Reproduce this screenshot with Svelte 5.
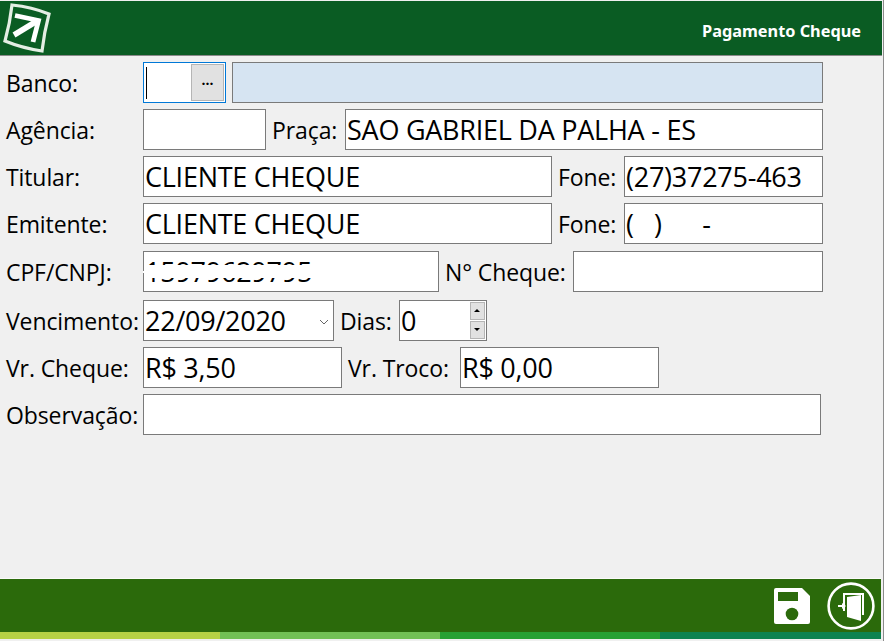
<script>
  let agencia = "";
  let praca = "SAO GABRIEL DA PALHA - ES";
  let titular = "CLIENTE CHEQUE";
  let foneTitular = "(27)37275-463";
  let emitente = "CLIENTE CHEQUE";
  let foneEmitente = "(   )      -";
  let cpf = "15979629795";
  let vencimento = "22/09/2020";
  let dias = "0";
  let vrCheque = "R$ 3,50";
  let vrTroco = "R$ 0,00";
</script>

<div class="page">
  <header class="top">
    <svg class="logo" viewBox="0 0 54 54" width="54" height="54">
      <path d="M12 4 Q32 6 49 13 Q44 32 42 50 Q22 47 5 40 Q10 22 12 4 Z" fill="none" stroke="#e4eee4" stroke-width="3.2" />
      <path d="M15 14.5 L38.5 19.5 L33 41" fill="none" stroke="#fff" stroke-width="4.8" />
      <path d="M37 20 L14 34" fill="none" stroke="#fff" stroke-width="5.6" />
    </svg>
    <span class="title">Pagamento Cheque</span>
  </header>

  <main class="form">
    <div class="row">
      <span class="lbl w-137">Banco:</span>
      <div class="field w-83 focus">
        <i class="caret"></i>
        <span class="lookup">...</span>
      </div>
      <div class="field w-591 tint"></div>
    </div>

    <div class="row">
      <span class="lbl w-137">Agência:</span>
      <div class="field w-123">{agencia}</div>
      <span class="lbl w-79 in">Praça:</span>
      <div class="field w-478">{praca}</div>
    </div>

    <div class="row">
      <span class="lbl w-137">Titular:</span>
      <div class="field w-409">{titular}</div>
      <span class="lbl w-72 in">Fone:</span>
      <div class="field w-199">{foneTitular}</div>
    </div>

    <div class="row">
      <span class="lbl w-137">Emitente:</span>
      <div class="field w-409">{emitente}</div>
      <span class="lbl w-72 in">Fone:</span>
      <div class="field w-199">{foneEmitente}</div>
    </div>

    <div class="row nudge-1">
      <span class="lbl w-137">CPF/CNPJ:</span>
      <div class="field w-296">{cpf}<i class="mask"></i></div>
      <span class="lbl w-134 in">N° Cheque:</span>
      <div class="field w-250"></div>
    </div>

    <div class="row nudge-2">
      <span class="lbl w-137">Vencimento:</span>
      <div class="field w-191">
        {vencimento}
        <svg class="chev" viewBox="0 0 10 6" width="10" height="6">
          <path d="M1 1 L5 5 L9 1" fill="none" stroke="#666" stroke-width="1" />
        </svg>
      </div>
      <span class="lbl w-65 in">Dias:</span>
      <div class="field w-88">
        {dias}
        <div class="spins">
          <span class="up"></span>
          <span class="down"></span>
        </div>
      </div>
    </div>

    <div class="row">
      <span class="lbl w-137">Vr. Cheque:</span>
      <div class="field w-199">{vrCheque}</div>
      <span class="lbl w-118 in">Vr. Troco:</span>
      <div class="field w-199">{vrTroco}</div>
    </div>

    <div class="row">
      <span class="lbl w-137">Observação:</span>
      <div class="field w-678"></div>
    </div>
  </main>

  <footer class="bottom">
    <svg viewBox="0 0 36 36" width="36" height="36">
      <path d="M2 0 H28 L36 8 V34 Q36 36 34 36 H2 Q0 36 0 34 V2 Q0 0 2 0 Z" fill="#fff" />
      <rect x="4" y="4" width="20" height="9" fill="#2b6a0b" />
      <circle cx="18" cy="26" r="6.3" fill="#2b6a0b" />
    </svg>
    <svg viewBox="0 0 48 48" width="48" height="48">
      <circle cx="24" cy="24" r="22.4" fill="none" stroke="#fff" stroke-width="2.6" />
      <path d="M16 29 V11 H37 V33 H35 V13 H18 V29 Z" fill="#fff" />
      <path d="M20 15 L34 13 V39 L20 35 Z" fill="#fff" />
      <path d="M11 24 H16" stroke="#fff" stroke-width="2" fill="none" />
      <path d="M15 21 L19 24 L15 27 Z" fill="#fff" />
    </svg>
  </footer>
  <div class="stripes">
    <span class="s1"></span><span class="s2"></span><span class="s3"></span><span class="s4"></span>
  </div>
</div>

<style>
  :global(body) {
    background: #f0f0f0;
  }
  .page {
    display: flex;
    flex-direction: column;
    width: 883px;
    height: 641px;
    overflow: hidden;
    font-family: "Open Sans", "Liberation Sans", sans-serif;
    color: #000;
    background: #f0f0f0;
    border-right: 1px solid #8c8c8c;
    box-sizing: content-box;
  }
  .top {
    display: flex;
    align-items: center;
    justify-content: space-between;
    height: 55px;
    margin: 1px 1px 0 0;
    padding: 0 21px 0 0;
    box-sizing: border-box;
    background: #0a5c23;
    border-bottom: 1px solid #8a8a8a;
    flex: none;
  }
  .logo {
    display: block;
  }
  .title {
    color: #fff;
    font-family: "Noto Sans", sans-serif;
    font-weight: 700;
    font-size: 16.3px;
    padding-top: 5px;
  }
  .form {
    flex: 1;
    display: flex;
    flex-direction: column;
    gap: 6px;
    padding: 6px 0 0 6px;
  }
  .row {
    display: flex;
    align-items: center;
    height: 41px;
  }
  .nudge-1 {
    margin-top: 1px;
  }
  .nudge-2 {
    margin-top: 2px;
  }
  .lbl {
    font-size: 23px;
    letter-spacing: -0.1px;
    white-space: nowrap;
    flex: none;
    padding-top: 1px;
  }
  .lbl.in {
    padding-left: 6px;
    box-sizing: border-box;
  }
  .field {
    display: flex;
    align-items: center;
    position: relative;
    height: 41px;
    box-sizing: border-box;
    flex: none;
    padding-left: 1px;
    background: #fff;
    border: 1px solid #7a7a7a;
    font-size: 27px;
    letter-spacing: -0.25px;
    white-space: pre;
  }
  .focus {
    border-color: #0078d7;
    padding: 0;
  }
  .caret {
    width: 1px;
    height: 32px;
    margin-left: 2px;
    background: #000;
  }
  .lookup {
    position: absolute;
    right: 1px;
    top: 1px;
    bottom: 1px;
    width: 33px;
    display: flex;
    align-items: center;
    justify-content: center;
    box-sizing: border-box;
    border: 1px solid #b5b5b5;
    background: #e1e1e1;
    font-size: 14px;
    font-weight: 700;
    line-height: 1;
    letter-spacing: 0;
    padding-bottom: 6px;
  }
  .tint {
    background: #d6e4f2;
    margin-left: 6px;
  }
  .mask {
    position: absolute;
    left: 0;
    top: 13px;
    width: 170px;
    height: 13px;
    background: #fff;
  }
  .mask::before {
    content: "";
    position: absolute;
    left: -1px;
    top: 6px;
    width: 1px;
    height: 2px;
    background: #fff;
  }
  .chev {
    position: absolute;
    right: 4px;
    top: 18px;
  }
  .spins {
    position: absolute;
    right: 1px;
    top: 1px;
    bottom: 1px;
    width: 15px;
    display: flex;
    flex-direction: column;
    gap: 1px;
  }
  .spins span {
    flex: 1;
    position: relative;
    background: #e1e1e1;
    border: 1px solid #b5b5b5;
  }
  .spins span::after {
    content: "";
    position: absolute;
    left: 3px;
    top: 6px;
    border-left: 3px solid transparent;
    border-right: 3px solid transparent;
  }
  .spins .up::after {
    border-bottom: 3px solid #000;
  }
  .spins .down::after {
    border-top: 3px solid #000;
  }
  .bottom {
    display: flex;
    align-items: center;
    justify-content: flex-end;
    gap: 17px;
    height: 54px;
    padding-right: 6px;
    margin-right: 2px;
    box-sizing: border-box;
    background: #2b6a0b;
    border-top: 1px solid #fafafa;
    flex: none;
  }
  .stripes {
    display: flex;
    height: 7px;
    margin: 0 2px 2px 0;
    flex: none;
  }
  .stripes span {
    width: 220px;
  }
  .s1 { background: #b5d145; }
  .s2 { background: #72c055; }
  .s3 { background: #26a133; }
  .s4 { background: #0c8350; flex: 1; }

  .w-65 { width: 65px; }
  .w-72 { width: 72px; }
  .w-79 { width: 79px; }
  .w-83 { width: 83px; }
  .w-88 { width: 88px; }
  .w-118 { width: 118px; }
  .w-123 { width: 123px; }
  .w-134 { width: 134px; }
  .w-137 { width: 137px; }
  .w-191 { width: 191px; }
  .w-199 { width: 199px; }
  .w-250 { width: 250px; }
  .w-296 { width: 296px; }
  .w-409 { width: 409px; }
  .w-478 { width: 478px; }
  .w-591 { width: 591px; }
  .w-678 { width: 678px; }
</style>
